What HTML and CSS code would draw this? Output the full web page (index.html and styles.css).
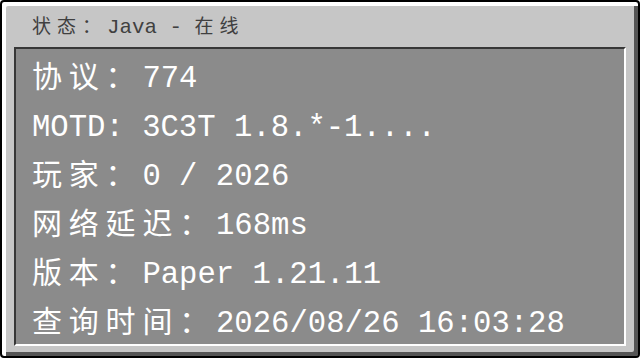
FILE: index.html
```html
<!DOCTYPE html>
<html lang="zh-CN">
<head>
<meta charset="utf-8">
<title>状态</title>
<link rel="stylesheet" href="styles.css">
</head>
<body>
<div class="panel">
  <div class="title"><span class="cjk">状态：</span>Java - <span class="cjk">在线</span></div>
  <div class="info">
    <div class="row"><span class="cjk">协议：</span>774</div>
    <div class="row">MOTD: 3C3T 1.8.*-1....</div>
    <div class="row"><span class="cjk">玩家：</span>0 / 2026</div>
    <div class="row"><span class="cjk">网络延迟：</span>168ms</div>
    <div class="row"><span class="cjk">版本：</span>Paper 1.21.11</div>
    <div class="row"><span class="cjk">查询时间：</span>2026/08/26 16:03:28</div>
  </div>
</div>
</body>
</html>
```
FILE: styles.css
```css
html, body {
  margin: 0;
  padding: 0;
  background: #ffffff;
}

.panel {
  box-sizing: border-box;
  width: 640px;
  height: 358px;
  border: 2px solid #000000;
  border-radius: 4px;
  background: #c6c6c6;
  box-shadow: inset 4px 4px 0 #ffffff, inset -4px -4px 0 #555555;
  padding: 4px 12px 10px 12px;
  display: flex;
  flex-direction: column;
}

.title {
  height: 38px;
  line-height: 38px;
  padding-top: 3px;
  padding-left: 18px;
  color: #404040;
  font-family: "Liberation Mono", "DejaVu Sans Mono", monospace;
  font-size: 20.8px;
  white-space: pre;
}

.title .cjk {
  font-family: "Noto Sans CJK SC", sans-serif;
  font-size: 19px;
  line-height: 1;
  letter-spacing: 6px;
}

.info {
  box-sizing: border-box;
  height: 299px;
  border-style: solid;
  border-width: 2px;
  border-color: #373737 #ffffff #ffffff #373737;
  background: #8b8b8b;
  padding: 6px 0 0 16px;
  color: #ffffff;
  font-family: "Liberation Mono", "DejaVu Sans Mono", monospace;
  font-size: 30.6px;
}

.row {
  height: 49px;
  line-height: 49px;
  white-space: pre;
}

.row .cjk {
  font-family: "Noto Sans CJK SC", sans-serif;
  font-size: 30px;
  line-height: 1;
  letter-spacing: 6.8px;
}
```
